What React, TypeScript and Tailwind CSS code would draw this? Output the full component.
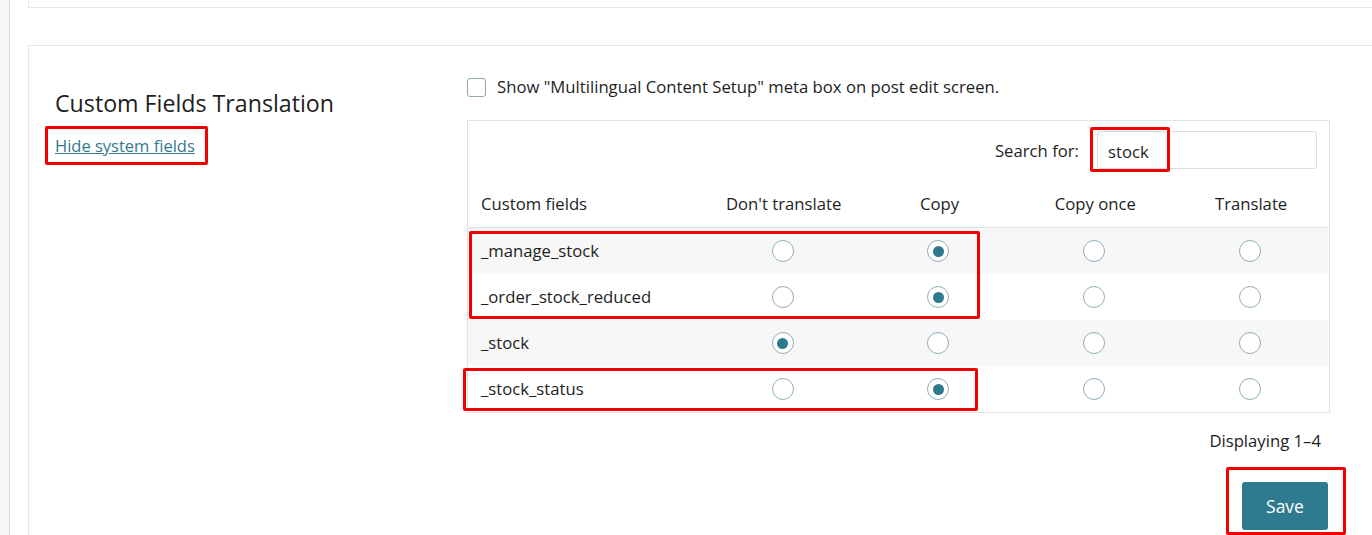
import { useState } from "react";

const fields = [
  { name: "_manage_stock", value: 1 },
  { name: "_order_stock_reduced", value: 1 },
  { name: "_stock", value: 0 },
  { name: "_stock_status", value: 1 },
];

const columns = ["Don't translate", "Copy", "Copy once", "Translate"];

function Radio({ checked }: { checked: boolean }) {
  return (
    <span className="w-[22px] h-[22px] rounded-full border border-[#8fb0bc] bg-white flex items-center justify-center">
      {checked ? <span className="w-[11px] h-[11px] rounded-full bg-[#2d7a8f]" /> : null}
    </span>
  );
}

export default function App() {
  const [rows, setRows] = useState(fields);

  function choose(i: number, v: number) {
    setRows(rows.map((r, idx) => (idx === i ? { ...r, value: v } : r)));
  }

  return (
    <div
      className="relative flex h-[535px] overflow-hidden bg-white text-[#1e1e1e]"
      style={{ fontFamily: '"Segoe UI", "Open Sans", "Noto Sans", sans-serif' }}
    >
      <div className="w-[10px] shrink-0 bg-[#f6f6f6] border-r border-[#dcdcdc]" />
      <div className="flex-1 pl-[18px]">
        <div className="h-[8px] border-l border-b border-[#e6e6e6]" />
        <div className="mt-[37px] h-[600px] border-l border-t border-[#e6e6e6] flex pt-[32px]">
          <div className="w-[438px] shrink-0 pl-[26px] pt-[10px]">
            <h2 className="text-[23.2px] leading-[30px]">Custom Fields Translation</h2>
            <a href="#" className="inline-block mt-[17px] text-[16.5px] leading-[22px] text-[#34788f] underline">
              Hide system fields
            </a>
          </div>

          <div className="w-[863px] shrink-0 text-[16.7px]">
            <label className="flex items-center gap-[11px] h-[18px]">
              <span className="w-[19px] h-[19px] rounded-[3px] border border-[#8fa9b4] bg-white" />
              Show "Multilingual Content Setup" meta box on post edit screen.
            </label>

            <div className="mt-[24px] border border-[#e2e2e2]">
              <div className="flex justify-end items-center gap-[18px] pt-[10px] pb-[12px] pr-[12px]">
                <span className="pt-[2px]">Search for:</span>
                <input
                  defaultValue="stock"
                  className="w-[220px] h-[38px] border border-[#dcdcdc] rounded-[3px] pl-[10px] pt-[2px] outline-none"
                />
              </div>
              <div className="flex items-center h-[47px] border-b border-[#e2e2e2]">
                <div className="w-[238px] pl-[13px]">Custom fields</div>
                {columns.map((c) => (
                  <div key={c} className="w-[156px] text-center">
                    {c}
                  </div>
                ))}
              </div>
              {rows.map((r, i) => (
                <div
                  key={r.name}
                  className={`flex items-center h-[46px] ${i % 2 === 0 ? "bg-[#f7f7f7]" : "bg-white"}`}
                >
                  <div className="w-[238px] pl-[13px]">{r.name}</div>
                  {columns.map((c, ci) => (
                    <div key={c} className="w-[156px] flex justify-center pr-[2px]" onClick={() => choose(i, ci)}>
                      <Radio checked={r.value === ci} />
                    </div>
                  ))}
                </div>
              ))}
            </div>

            <div className="mt-[16px] pr-[9px] text-right leading-[24px]">Displaying 1–4</div>
            <div className="mt-[29px] flex justify-end pr-[2px]">
              <button className="w-[86px] h-[48px] rounded-[3px] bg-[#2e7a8f] text-white text-[17.5px]">Save</button>
            </div>
          </div>
        </div>
      </div>

      {/* red annotation boxes */}
      <div className="absolute left-[45px] top-[126px] w-[163px] h-[39px] border-[3px] border-[#f00000] rounded-[2px]" />
      <div className="absolute left-[1090px] top-[127px] w-[80px] h-[45px] border-[3px] border-[#f00000] rounded-[2px]" />
      <div className="absolute left-[469px] top-[231px] w-[511px] h-[88px] border-[3px] border-[#f00000] rounded-[2px]" />
      <div className="absolute left-[463px] top-[368px] w-[515px] h-[43px] border-[3px] border-[#f00000] rounded-[2px]" />
      <div className="absolute left-[1226px] top-[467px] w-[120px] h-[68px] border-[3px] border-[#f00000] rounded-[2px]" />
    </div>
  );
}
